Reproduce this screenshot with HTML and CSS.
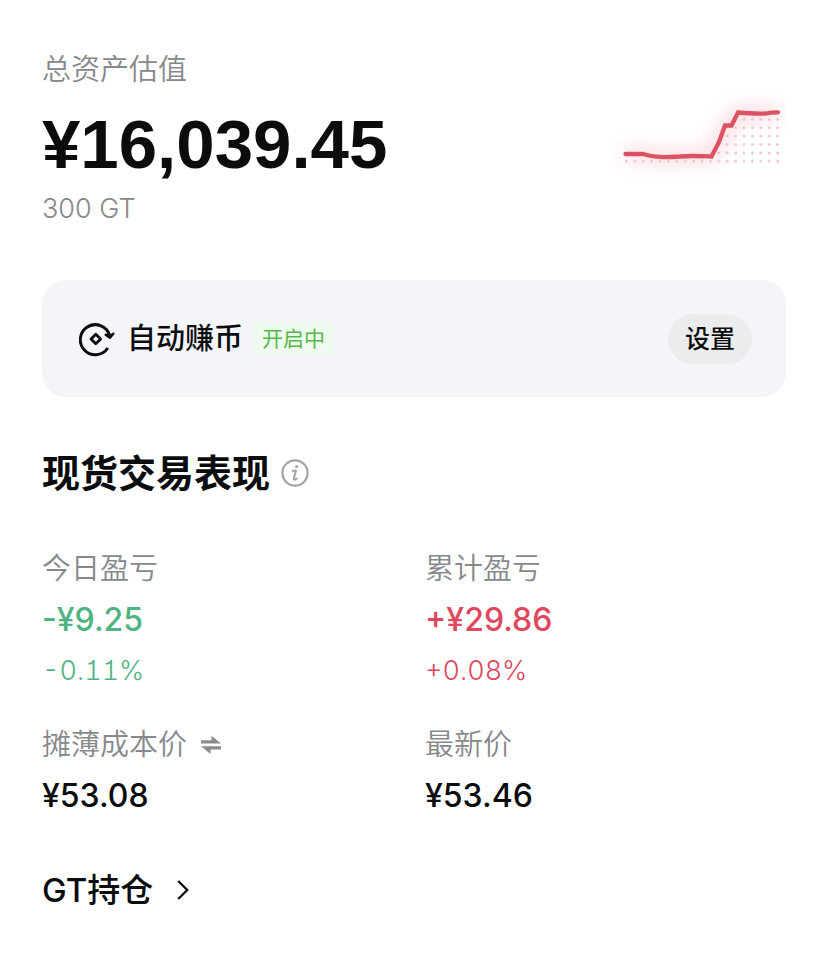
FILE: index.html
```html
<!DOCTYPE html>
<html lang="zh-CN">
<head>
<meta charset="utf-8">
<meta name="viewport" content="width=device-width, initial-scale=1">
<title>总资产估值</title>
<link rel="stylesheet" href="styles.css">
</head>
<body>
<main class="page">
  <section class="summary">
    <div class="summary-text">
      <h1 class="label">总资产估值</h1>
      <p class="total">¥16,039.45</p>
      <p class="holding">300 GT</p>
    </div>
    <svg class="trend" width="172" height="100" viewBox="614 88 172 100" aria-hidden="true">
      <defs>
        <pattern id="dots" x="622.2" y="111" width="8.4" height="8.4" patternUnits="userSpaceOnUse">
          <circle cx="4.2" cy="8.2" r="1.3" fill="#e9bcc5"/>
          <circle cx="4.2" cy="-.2" r="1.3" fill="#e9bcc5"/>
        </pattern>
        <filter id="glow" x="-20%" y="-80%" width="140%" height="260%">
          <feGaussianBlur stdDeviation="9"/>
        </filter>
      </defs>
      <path d="M625 154H644C653 158 665 157 680 156.500L711.500 156L719 142L725 125.500H731L738 112.500C750 114 758 114 766 113L779 112" fill="none" stroke="#f04a60" stroke-opacity=".28" stroke-width="10" filter="url(#glow)"/>
      <path d="M622 159H712L725 132H733L740 116H779V165H622Z" fill="url(#dots)"/>
      <path d="M625.500 154H643C654 157.500 663 157.500 680 156.500C690 155.500 700 156 711.500 156.500L719 142L725 125.500H731.500L738 112.500C750 113.500 758 114 766 113.500C770 112.500 774 112.300 778 112.300" fill="none" stroke="#dc5163" stroke-width="4.300" stroke-linecap="round" stroke-linejoin="miter"/>
    </svg>
  </section>

  <section class="earn">
    <svg class="earn-icon" width="36" height="36" viewBox="0 0 36 36" fill="none" stroke="#0b0c0e" stroke-width="3" aria-hidden="true">
      <path d="M28.800 27A15 15 0 1 1 30.700 14.500"/>
      <path d="M26.700 13.700L31 16.700L34.300 12.700L31.500 15Z" fill="#0b0c0e" stroke-width="2.400" stroke-linejoin="round"/>
      <path d="M16.800 13.200L21.600 18L16.800 22.800L12 18Z" stroke-width="2.800" stroke-linejoin="round"/>
    </svg>
    <h2 class="earn-title">自动赚币</h2>
    <span class="badge">开启中</span>
    <button class="settings" type="button">设置</button>
  </section>

  <section class="performance">
    <div class="heading">
      <h2 class="heading-title">现货交易表现</h2>
      <button class="icon-button" type="button" aria-label="说明">
        <svg width="28" height="28" viewBox="0 0 28 28" fill="none" stroke="#a3a3a5" aria-hidden="true">
          <circle cx="14" cy="14" r="12.600" stroke-width="2.200"/>
          <circle cx="15.600" cy="7.500" r="1.600" fill="#a3a3a5" stroke="none"/>
          <path d="M11 12.200C12.500 11.800 13.500 11.600 15 11.500L12.800 19.500C12.500 21.200 14 21.200 16.200 19" stroke-width="1.900" stroke-linejoin="round"/>
        </svg>
      </button>
    </div>
    <dl class="stats">
      <div class="stat">
        <dt class="label">今日盈亏</dt>
        <dd class="value down">-¥9.25</dd>
        <dd class="percent down">-0.11%</dd>
      </div>
      <div class="stat">
        <dt class="label">累计盈亏</dt>
        <dd class="value up">+¥29.86</dd>
        <dd class="percent up">+0.08%</dd>
      </div>
      <div class="stat">
        <dt class="label">摊薄成本价
          <button class="icon-button" type="button" aria-label="切换">
            <svg width="20" height="20" viewBox="0 0 20 20" fill="#8b8c8f" aria-hidden="true">
              <path d="M0 5.300H10.500V.8L20 8.500H0ZM20 14.500H9.500V19L0 11.300H20Z"/>
            </svg>
          </button>
        </dt>
        <dd class="value">¥53.08</dd>
      </div>
      <div class="stat">
        <dt class="label">最新价</dt>
        <dd class="value">¥53.46</dd>
      </div>
    </dl>
  </section>

  <a class="position-link" href="#position">GT持仓
    <svg width="12" height="20" viewBox="0 0 12 20" fill="none" stroke="#0b0c0e" stroke-width="2.400" aria-hidden="true">
      <path d="M1.200 1L10.200 10L1.200 19"/>
    </svg>
  </a>
</main>
</body>
</html>
```
FILE: styles.css
```css
* {
  box-sizing: border-box;
}

body,
h1,
h2,
p,
dl,
dd {
  margin: 0;
}

body {
  background: #fff;
  color: #0b0c0e;
  font-family: Inter, "Noto Sans CJK SC", sans-serif;
}

button {
  padding: 0;
  border: 0;
  background: none;
  color: inherit;
  font: inherit;
  cursor: pointer;
}

svg {
  display: block;
  flex: none;
}

.page {
  padding: 50px 42px 48px;
}

.summary {
  display: flex;
  align-items: center;
  justify-content: space-between;
}

.label {
  display: flex;
  align-items: center;
  gap: 14px;
  color: #87888b;
  font-size: 29px;
  font-weight: 350;
  line-height: 40px;
}

.total {
  margin-top: 15px;
  font-family: "Liberation Sans", Arial, sans-serif;
  font-size: 69px;
  font-weight: 700;
  line-height: 80px;
}

.holding {
  margin-top: 8px;
  color: #87888b;
  font-size: 27px;
  font-weight: 300;
  line-height: 32px;
}

.earn {
  display: flex;
  align-items: center;
  margin-top: 55px;
  padding: 34px 34px 33px 37px;
  border-radius: 24px;
  background: #f4f5f8;
}

.earn-title {
  margin-left: 12px;
  font-size: 29px;
  font-weight: 500;
  line-height: 40px;
}

.badge {
  margin-left: 10px;
  padding: 0 9px;
  border-radius: 4px;
  background: #effaf0;
  color: #55b847;
  font-size: 21px;
  line-height: 34px;
}

.settings {
  margin-left: auto;
  padding: 0 17px;
  border-radius: 25px;
  background: #ebecee;
  font-size: 25px;
  font-weight: 500;
  line-height: 50px;
}

.heading {
  display: flex;
  align-items: center;
  gap: 11px;
  margin-top: 52px;
}

.heading-title {
  font-size: 38px;
  font-weight: 600;
  line-height: 48px;
}

.stats {
  display: grid;
  grid-template-columns: 1fr 1fr;
  gap: 38px 22px;
  margin-top: 52px;
}

.value {
  margin-top: 11px;
  font-size: 32px;
  font-weight: 500;
  line-height: 40px;
}

.percent {
  margin-top: 15px;
  font-size: 27px;
  font-weight: 300;
  font-feature-settings: "tnum", "ss01", "cv01";
  line-height: 32px;
}

.down {
  color: #4fb482;
}

.up {
  color: #e04860;
}

.position-link {
  display: inline-flex;
  align-items: center;
  gap: 24px;
  margin-top: 54px;
  color: inherit;
  font-size: 33px;
  font-weight: 500;
  line-height: 40px;
  text-decoration: none;
}
```
